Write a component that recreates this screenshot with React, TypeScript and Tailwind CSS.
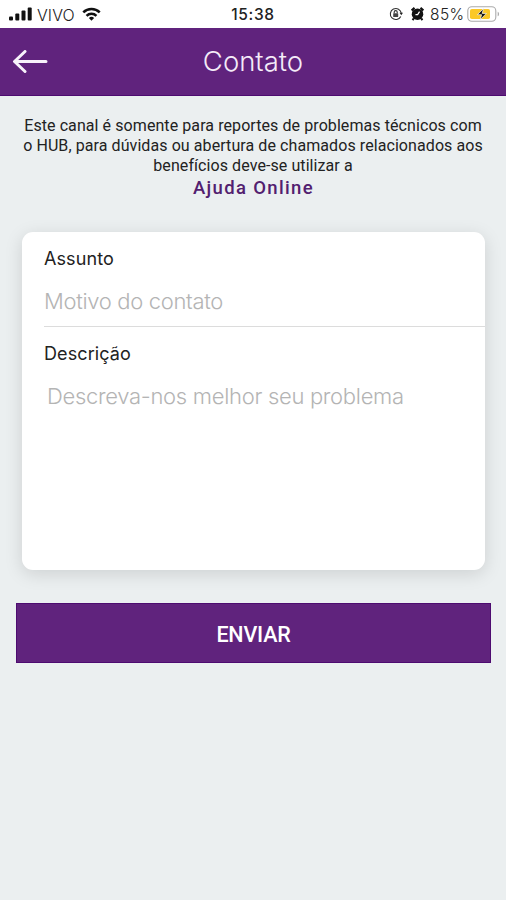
function StatusBar() {
  return (
    <div className="grid h-7 grid-cols-3 items-center bg-white pt-px font-['Inter',sans-serif] text-[15px] text-[#222]">
      <div className="flex items-center pl-[9px]">
        <svg className="-mt-0.5" width="23" height="14" viewBox="0 0 23 14" fill="#111">
          <rect x="0" y="9.5" width="4" height="4" rx="1" />
          <rect x="6.3" y="6.5" width="4" height="7" rx="1" />
          <rect x="12.5" y="3.5" width="4" height="10" rx="1" />
          <rect x="18.7" y="0.5" width="4" height="13" rx="1" />
        </svg>
        <span className="ml-[5px] w-[38px] whitespace-nowrap text-[16px] font-light tracking-[0.1px]">VIVO</span>
        <svg className="-mt-0.5 ml-[7px]" width="19" height="14" viewBox="0 0 20 15" fill="none" stroke="#111" strokeWidth="2.7">
          <path d="M1.2 5.7a12.5 12.5 0 0 1 17.6 0" />
          <path d="M4.7 9.4a7.5 7.5 0 0 1 10.6 0" />
          <path d="M7.2 11.8a4 4 0 0 1 5.6 0L10 14.6z" fill="#111" stroke="none" />
        </svg>
      </div>
      <div className="text-center text-[15.5px] font-medium tracking-[0.7px]">15:38</div>
      <div className="flex items-center justify-end pr-[6px]">
        <svg className="-mt-px" width="14" height="14" viewBox="0 0 14 14" fill="none" stroke="#333" strokeWidth="1.1">
          <path d="M11.8 9.4a5.5 5.5 0 1 1 .5-3" />
          <path d="M10.6 5.8h3.4l-1.7 2.4z" fill="#222" stroke="none" />
          <rect x="4.2" y="6.2" width="5" height="3.7" rx=".5" fill="#444" stroke="none" />
          <path d="M5.2 6.3V5.1a1.5 1.5 0 0 1 3 0v1.2" />
        </svg>
        <svg className="-mt-0.5 ml-2" width="13" height="14" viewBox="0 0 14 15">
          <circle cx="7" cy="7.7" r="6.2" fill="#111" />
          <path d="M.7 3.6 3.8.9M13.3 3.6 10.2.9M3 12.2l-1.3 1.8M11 12.2l1.3 1.8" stroke="#111" strokeWidth="2.2" />
          <path d="M9.2 5 7.2 8.2H4.8" fill="none" stroke="#fff" strokeWidth="1.3" />
        </svg>
        <span className="ml-[6px] w-[35px] whitespace-nowrap text-[15.5px] font-light tracking-[0.4px]">85%</span>
        <svg className="-mt-px ml-[2px]" width="33" height="16" viewBox="0 0 33 16">
          <rect x=".8" y=".8" width="28" height="14.4" rx="4" fill="#fff" stroke="#aaa" strokeWidth="1.1" />
          <rect x="3" y="3" width="20" height="10" rx="1.8" fill="#fbc827" />
          <path d="M30.7 5.7v4.6c1.8-.7 1.8-3.9 0-4.6z" fill="#aaa" />
          <path d="M16.5 2.5 10.5 8.7h4.1l-1.4 5L19.4 7.4h-4.2z" fill="#111" stroke="#fff" strokeWidth=".7" />
        </svg>
      </div>
    </div>
  );
}

function Header() {
  return (
    <header className="grid h-[68px] grid-cols-[50px_1fr_50px] items-center border-b border-[#4d0b70] bg-[#60237d] font-['Inter',sans-serif] text-white">
      <button aria-label="Voltar" className="pl-[12px]">
        <svg width="36" height="24" viewBox="0 0 36 24" fill="none" stroke="#f8f2fb" strokeWidth="3" strokeLinecap="round" strokeLinejoin="round">
          <path d="M34 11.5H3M13 1.5l-10.5 10L13 21.5" />
        </svg>
      </button>
      <h1 className="whitespace-nowrap text-center text-[27.5px] font-light text-[#f4ebf8]">Contato</h1>
    </header>
  );
}

export default function App() {
  return (
    <div className="flex h-[900px] w-[506px] flex-col overflow-hidden bg-[#ebeff0] text-[#222]">
      <StatusBar />
      <Header />
      <main className="flex flex-col">
        <section className="mt-5 text-center font-['Roboto',sans-serif] text-[16px] leading-5 tracking-[0.08px]">
          <p className="whitespace-nowrap">Este canal é somente para reportes de problemas técnicos com</p>
          <p className="whitespace-nowrap">o HUB, para dúvidas ou abertura de chamados relacionados aos</p>
          <p className="whitespace-nowrap">benefícios deve-se utilizar a</p>
          <a className="block pl-px text-[18.5px] leading-[24px] font-medium tracking-[1.35px] text-[#52206f]">Ajuda Online</a>
        </section>
        <form className="mr-[21px] ml-[22px] mt-8 flex h-[338px] flex-col rounded-[11px] bg-white pl-[22px] font-['Inter',sans-serif] shadow-[0_4px_18px_rgba(0,0,0,0.13)]">
          <label className="mt-[15px] text-[18px] leading-6 tracking-[0.1px] text-[#222]">Assunto</label>
          <div className="mt-[9px] flex h-[47px] items-center border-b border-[#dcdcdc] pb-[3px] text-[22px] font-light tracking-[-0.33px] text-[#b4b4b4]">Motivo do contato</div>
          <label className="mt-[15px] text-[18px] leading-6 tracking-[0.1px] text-[#222]">Descrição</label>
          <div className="mt-[15px] pl-[3px] text-[22px] leading-[30px] font-light tracking-[-0.3px] whitespace-nowrap text-[#b4b4b4]">Descreva-nos melhor seu problema</div>
        </form>
        <button className="mr-[15px] ml-4 mt-[33px] h-[60px] border border-[#4d0b70] bg-[#60237d] pt-1 font-['Roboto',sans-serif] text-[21.5px] font-medium tracking-[-0.2px] text-white">ENVIAR</button>
      </main>
    </div>
  );
}
